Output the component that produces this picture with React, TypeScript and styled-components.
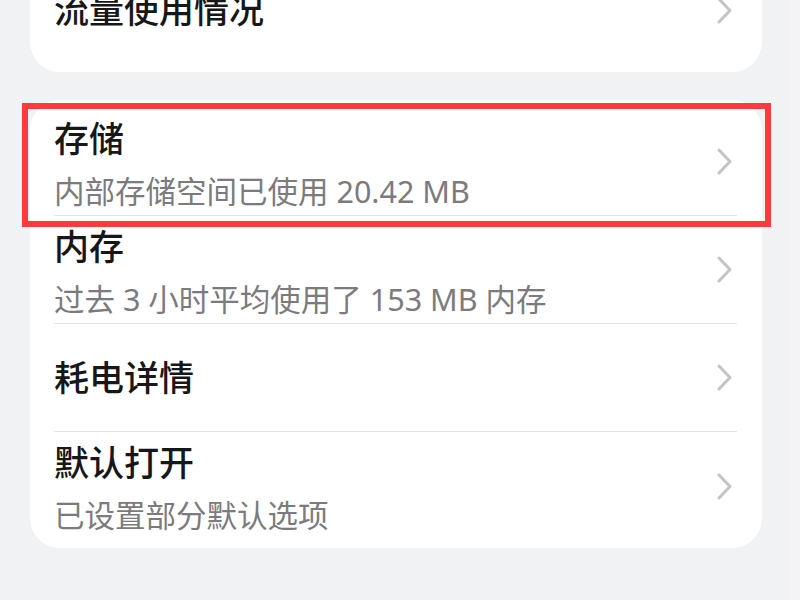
import React from "react";
import styled, { createGlobalStyle } from "styled-components";

const GlobalStyle = createGlobalStyle`
  html, body {
    margin: 0;
    padding: 0;
    width: 800px;
    height: 600px;
    overflow: hidden;
    background: #f1f2f4;
    font-family: "Noto Sans", "Noto Sans CJK SC", sans-serif;
  }
`;

const Page = styled.div`
  width: 800px;
  height: 600px;
  overflow: hidden;
  background: linear-gradient(to right, #f1f2f4 789px, #f4f4f6 789px);
`;

const Stack = styled.div`
  display: flex;
  flex-direction: column;
  gap: 28px;
  margin-top: -52px;
  padding: 0 38px 0 30px;
`;

const Card = styled.div`
  background: #ffffff;
  border-radius: 30px;
  padding: 8px 0;
  display: flex;
  flex-direction: column;
`;

const Row = styled.div<{ $divider?: boolean }>`
  position: relative;
  height: 108px;
  box-sizing: border-box;
  margin: 0 25px 0 24px;
  display: flex;
  align-items: center;
  justify-content: space-between;
  border-bottom: ${(p) => (p.$divider ? "1px solid #e4e4e6" : "none")};
`;

const TextBlock = styled.div<{ $two?: boolean }>`
  display: flex;
  flex-direction: column;
  gap: 8px;
  padding-top: ${(p) => (p.$two ? "6px" : "0")};
`;

const Title = styled.div`
  font-family: "Noto Sans", "Noto Sans CJK SC", sans-serif;
  font-size: 35px;
  line-height: 44px;
  font-weight: 500;
  color: #171717;
  white-space: nowrap;
`;

const Subtitle = styled.div`
  font-family: "Noto Sans", "Noto Sans CJK SC", sans-serif;
  font-size: 30.5px;
  line-height: 44px;
  color: #7b7b7d;
  white-space: nowrap;
`;

const ChevronWrap = styled.div`
  width: 15px;
  height: 27px;
  margin-right: 5px;
  display: flex;
`;

const Highlight = styled.div`
  position: absolute;
  left: -32px;
  right: -34px;
  top: -5px;
  bottom: -12px;
  border: 6px solid #ff3a3d;
  pointer-events: none;
`;

const Chevron = () => (
  <ChevronWrap>
    <svg width="15" height="27" viewBox="0 0 15 27" fill="none">
      <path
        d="M2 2 L13 13.5 L2 25"
        stroke="#c4c4c6"
        strokeWidth="3"
        strokeLinecap="round"
        strokeLinejoin="round"
      />
    </svg>
  </ChevronWrap>
);

type Item = { title: string; sub?: string; highlight?: boolean };

const items: Item[] = [
  { title: "存储", sub: "内部存储空间已使用 20.42 MB", highlight: true },
  { title: "内存", sub: "过去 3 小时平均使用了 153 MB 内存" },
  { title: "耗电详情" },
  { title: "默认打开", sub: "已设置部分默认选项" },
];

export default function App() {
  return (
    <Page>
      <GlobalStyle />
      <Stack>
        <Card>
          <Row>
            <TextBlock>
              <Title>流量使用情况</Title>
            </TextBlock>
            <Chevron />
          </Row>
        </Card>
        <Card>
          {items.map((it, i) => (
            <Row key={it.title} $divider={i < items.length - 1}>
              <TextBlock $two={!!it.sub}>
                <Title>{it.title}</Title>
                {it.sub && <Subtitle>{it.sub}</Subtitle>}
              </TextBlock>
              <Chevron />
              {it.highlight && <Highlight />}
            </Row>
          ))}
        </Card>
      </Stack>
    </Page>
  );
}
